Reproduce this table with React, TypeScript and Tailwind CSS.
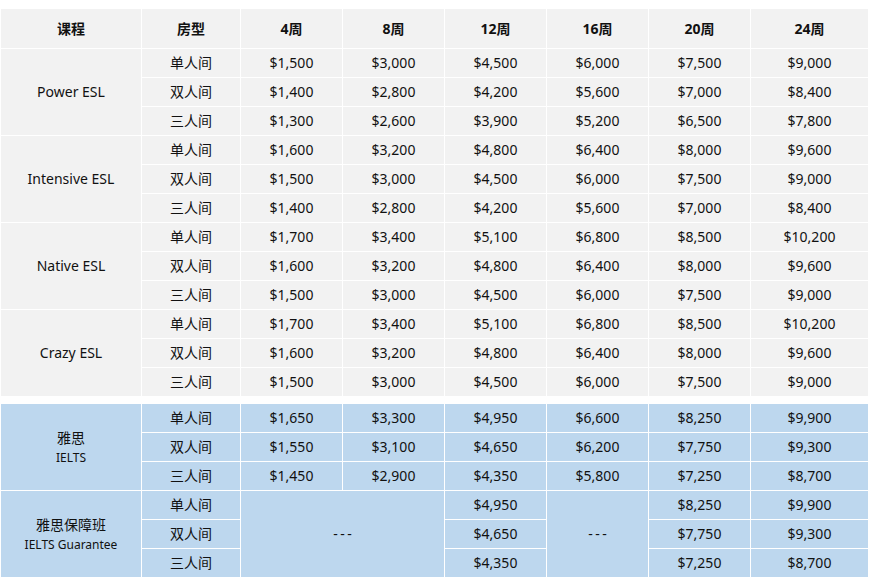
import React from 'react'

const rooms = ['单人间', '双人间', '三人间']
const weeks = ['4周', '8周', '12周', '16周', '20周', '24周']

const eslCourses = [
  {
    name: 'Power ESL',
    prices: [
      [1500, 3000, 4500, 6000, 7500, 9000],
      [1400, 2800, 4200, 5600, 7000, 8400],
      [1300, 2600, 3900, 5200, 6500, 7800],
    ],
  },
  {
    name: 'Intensive ESL',
    prices: [
      [1600, 3200, 4800, 6400, 8000, 9600],
      [1500, 3000, 4500, 6000, 7500, 9000],
      [1400, 2800, 4200, 5600, 7000, 8400],
    ],
  },
  {
    name: 'Native ESL',
    prices: [
      [1700, 3400, 5100, 6800, 8500, 10200],
      [1600, 3200, 4800, 6400, 8000, 9600],
      [1500, 3000, 4500, 6000, 7500, 9000],
    ],
  },
  {
    name: 'Crazy ESL',
    prices: [
      [1700, 3400, 5100, 6800, 8500, 10200],
      [1600, 3200, 4800, 6400, 8000, 9600],
      [1500, 3000, 4500, 6000, 7500, 9000],
    ],
  },
]

const ielts = [
  [1650, 3300, 4950, 6600, 8250, 9900],
  [1550, 3100, 4650, 6200, 7750, 9300],
  [1450, 2900, 4350, 5800, 7250, 8700],
]

// 12周 / 20周 / 24周 only, the rest is "---"
const guarantee = [
  [4950, 8250, 9900],
  [4650, 7750, 9300],
  [4350, 7250, 8700],
]

const fmt = (n: number) => '$' + n.toLocaleString('en-US')

const cols = 'grid grid-cols-[140px_98px_101px_101px_101px_101px_101px_117px] gap-px'
const cell = 'flex items-center justify-center text-center'

function Dash() {
  return <span className="tracking-[2.5px] pl-[2.5px]">---</span>
}

export default function App() {
  return (
    <div
      className="bg-white w-[870px] h-[583px] pt-[9px] pl-px text-[14px] leading-none text-[#111]"
      style={{ fontFamily: '"Noto Sans", "Noto Sans CJK SC", sans-serif' }}
    >
      <div className={`${cols} auto-rows-[28px] grid-rows-[39px] bg-white`}>
        <div className={`${cell} bg-[#f2f2f2] font-bold`}>课程</div>
        <div className={`${cell} bg-[#f2f2f2] font-bold`}>房型</div>
        {weeks.map((w) => (
          <div key={w} className={`${cell} bg-[#f2f2f2] font-bold`}>
            {w}
          </div>
        ))}

        {eslCourses.map((c) => (
          <React.Fragment key={c.name}>
            <div className={`${cell} row-span-3 bg-[#f2f2f2]`}>{c.name}</div>
            {c.prices.map((row, i) => (
              <React.Fragment key={i}>
                <div className={`${cell} bg-[#f2f2f2]`}>{rooms[i]}</div>
                {row.map((p, j) => (
                  <div key={j} className={`${cell} bg-[#f2f2f2]`}>
                    {fmt(p)}
                  </div>
                ))}
              </React.Fragment>
            ))}
          </React.Fragment>
        ))}
      </div>

      <div className={`${cols} auto-rows-[28px] mt-2 bg-white`}>
        <div className={`${cell} row-span-3 flex-col gap-[7px] bg-[#bdd7ee]`}>
          <span>雅思</span>
          <span className="text-[12px]">IELTS</span>
        </div>
        {ielts.map((row, i) => (
          <React.Fragment key={i}>
            <div className={`${cell} bg-[#bdd7ee]`}>{rooms[i]}</div>
            {row.map((p, j) => (
              <div key={j} className={`${cell} bg-[#bdd7ee]`}>
                {fmt(p)}
              </div>
            ))}
          </React.Fragment>
        ))}

        <div className={`${cell} row-span-3 flex-col gap-[7px] bg-[#bdd7ee]`}>
          <span>雅思保障班</span>
          <span className="text-[12px]">IELTS Guarantee</span>
        </div>
        <div className={`${cell} bg-[#bdd7ee]`}>{rooms[0]}</div>
        <div className={`${cell} col-span-2 row-span-3 bg-[#bdd7ee]`}>
          <Dash />
        </div>
        <div className={`${cell} bg-[#bdd7ee]`}>{fmt(guarantee[0][0])}</div>
        <div className={`${cell} row-span-3 bg-[#bdd7ee]`}>
          <Dash />
        </div>
        <div className={`${cell} bg-[#bdd7ee]`}>{fmt(guarantee[0][1])}</div>
        <div className={`${cell} bg-[#bdd7ee]`}>{fmt(guarantee[0][2])}</div>
        {[1, 2].map((i) => (
          <React.Fragment key={i}>
            <div className={`${cell} bg-[#bdd7ee]`}>{rooms[i]}</div>
            <div className={`${cell} col-start-5 bg-[#bdd7ee]`}>{fmt(guarantee[i][0])}</div>
            <div className={`${cell} col-start-7 bg-[#bdd7ee]`}>{fmt(guarantee[i][1])}</div>
            <div className={`${cell} bg-[#bdd7ee]`}>{fmt(guarantee[i][2])}</div>
          </React.Fragment>
        ))}
      </div>
    </div>
  )
}
